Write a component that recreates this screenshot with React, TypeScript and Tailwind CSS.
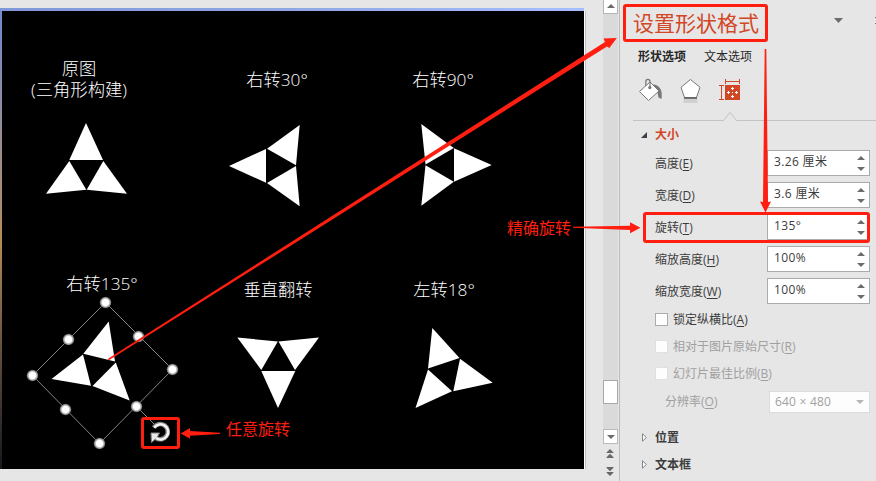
import React from "react";

const TRIANGLES: string[] = [
  "86,123 69.3,160 103,160",
  "69.3,161 46,193.7 86.3,189.7",
  "103.3,161 127,193.7 86.7,189.7",
  "229,166 266,149 266,182.7",
  "267,148.7 299.7,125 296,165.3",
  "267,183 299.7,206.3 296,166",
  "421.3,124 453.8,148 425.5,164.5",
  "421.3,205.7 453.8,181.7 425.5,165.3",
  "491.7,165 454,148.3 454,181.7",
  "108.7,321.5 83.3,353.7 115,361.5",
  "51.5,379 83,354.5 91,385.7",
  "129.7,400.5 115.8,362.5 92.5,386",
  "237.3,337.5 277.8,341.5 261.3,370",
  "319,337.5 278.5,341.5 295,370",
  "278,408 261.3,371 295.3,371",
  "432.3,328 459.5,358 428,368.5",
  "415.5,408 428,369.5 452,391.3",
  "492.7,382.7 460,358.7 453.3,391.3",
];

const HANDLES: [number, number][] = [
  [105.5, 302.5], [138.5, 336.5], [172.5, 369.5], [136.5, 406.5],
  [99.5, 443.5], [65.5, 409.5], [32.5, 375.5], [68.5, 339.5],
];

function SlideShapes() {
  return (
    <svg className="absolute left-0 top-0" width="620" height="481" viewBox="0 0 620 481">
      <defs>
        <radialGradient id="handle">
          <stop offset="0.55" stopColor="#fff" />
          <stop offset="0.75" stopColor="#b4b4b4" />
          <stop offset="1" stopColor="#555" />
        </radialGradient>
      </defs>
      {TRIANGLES.map((p) => (
        <polygon key={p} points={p} fill="#fff" />
      ))}
      <path d="M105.5 302.5 172.5 369.5 99.5 443.5 32.5 375.5ZM136.5 406.5 155 425" fill="none" stroke="#858585" strokeWidth="1" />
      {HANDLES.map(([x, y]) => (
        <circle key={x} cx={x} cy={y} r="5.8" fill="url(#handle)" />
      ))}
      <path d="M153.8 427.6A7.6 7.6 0 1 1 156 438" fill="none" stroke="#858585" strokeWidth="4.6" />
      <path d="M151 433H159.5L157 437.5 151.5 442.5Z" fill="#e8e8e8" stroke="#858585" strokeWidth="1" />
      <path d="M154.2 427.8A7.6 7.6 0 1 1 156 438" fill="none" stroke="#f4f4f4" strokeWidth="2.6" />
    </svg>
  );
}

function Annotations() {
  return (
    <svg className="pointer-events-none absolute left-0 top-0" width="876" height="481" viewBox="0 0 876 481">
      <g fill="none" stroke="#ff1e0f" strokeWidth="3">
        <rect x="624.5" y="5.5" width="142" height="35" rx="1.5" />
        <rect x="644.5" y="213.5" width="224" height="28" rx="1.5" />
        <rect x="142.5" y="418.5" width="36" height="29" rx="1.5" />
      </g>
      <g fill="#ff1e0f">
        <polygon points="108,358.8 605,42 603.5,38.5 616.8,38 609.3,48 607,46.5 108.5,360.5" />
        <polygon points="573,226.7 630,225.8 630,222.2 640.5,227.7 630,233.2 630,230 573,227.7" />
        <polygon points="764.7,49 766.3,49 768,202 771,201.5 765.5,212.5 760,201.5 763,202" />
        <polygon points="220,432.8 190,431 190,428 180.7,433.4 190,438.7 190,435.7 220,434" />
      </g>
    </svg>
  );
}

function DoubleArrow({ down = false }: { down?: boolean }) {
  return (
    <svg width="8" height="9" viewBox="0 0 8 9" className={down ? "rotate-180" : ""}>
      <path d="M4 0 7.5 3.5V4H.5V3.5ZM4 4.8 7.5 8.3V9H.5V8.3Z" fill="#686868" />
    </svg>
  );
}

function Triangle({ down = false, color = "#6c6c6c" }: { down?: boolean; color?: string }) {
  return (
    <svg width="8" height="4" viewBox="0 0 8 4" className={down ? "rotate-180" : ""}>
      <path d="M4 0 8 4H0Z" fill={color} />
    </svg>
  );
}

function Scrollbar() {
  return (
    <div className="flex h-[481px] w-[15px] flex-col items-center">
      <div className="flex h-[14px] w-[15px] shrink-0 items-center justify-center border border-t-0 border-[#b5b5b5] bg-white pb-[2px]">
        <Triangle />
      </div>
      <div className="h-[366px] w-full shrink-0 bg-[#dadada]" />
      <div className="h-6 w-full shrink-0 border border-[#a8a8a8] bg-white" />
      <div className="h-[25px] w-full shrink-0 bg-[#dadada]" />
      <div className="flex h-[15px] w-full shrink-0 items-center justify-center border border-[#bababa] bg-white">
        <Triangle down />
      </div>
      <div className="flex flex-col gap-[9px] pr-px pt-[5px]">
        <DoubleArrow />
        <DoubleArrow down />
      </div>
    </div>
  );
}

function Caption({ className, children }: { className: string; children: React.ReactNode }) {
  return (
    <div className={"absolute -translate-x-1/2 whitespace-nowrap text-center text-[17.3px] font-light leading-[21px] text-white " + className}>
      {children}
    </div>
  );
}

function Slide() {
  return (
    <div className="relative flex h-[481px] w-[603px] shrink-0 flex-col pt-2">
      <div className="h-[3px] w-[584px] bg-gradient-to-r from-[#7f96d8] via-[#8fa8e4] to-[#a6bdff]" />
      <div className="flex h-[458px] w-[586px] border-r border-[#c2c2c2]">
        <div className="w-[2px] bg-gradient-to-b from-[#7187cf] via-[#b68b58] to-[#17171f]" />
        <div className="w-[582px] bg-black" />
        <div className="w-px bg-white" />
      </div>
      <SlideShapes />
      <Caption className="left-[79px] top-[58px]">原图<br />(三角形构建)</Caption>
      <Caption className="left-[277px] top-[69px]">右转30°</Caption>
      <Caption className="left-[443px] top-[69px]">右转90°</Caption>
      <Caption className="left-[102px] top-[273px]">右转135°</Caption>
      <Caption className="left-[278px] top-[279px]">垂直翻转</Caption>
      <Caption className="left-[444px] top-[279px]">左转18°</Caption>
      <div className="absolute left-[507px] top-[217px] whitespace-nowrap text-[16px] leading-[22px] text-[#ff1e0f]">精确旋转</div>
      <div className="absolute left-[226px] top-[418px] whitespace-nowrap text-[16px] leading-[22px] text-[#ff1e0f]">任意旋转</div>
    </div>
  );
}

function Hotkey({ k }: { k: string }) {
  return <>(<span className="underline underline-offset-2">{k}</span>)</>;
}

function Field({ label, k, value }: { label: string; k: string; value: string }) {
  return (
    <div className="flex h-[26px] items-center justify-between pl-[35px] pr-[6px]">
      <span className="pt-px">{label}<Hotkey k={k} /></span>
      <div className="flex h-[26px] w-[103px] items-center justify-between border border-[#ababab] bg-white pl-[6px] pr-1">
        <span className="pb-[2px] tracking-[0.35px]">{value}</span>
        <div className="flex flex-col gap-[7px] pt-px">
          <Triangle />
          <Triangle down />
        </div>
      </div>
    </div>
  );
}

function Check({ label, k, disabled = false }: { label: string; k: string; disabled?: boolean }) {
  return (
    <div className={"flex h-[27px] items-center gap-[5px] pl-[35px] " + (disabled ? "text-[#a0a0a0]" : "")}>
      <div className={"size-[13px] border bg-[#fdfdfd] " + (disabled ? "border-[#e0e0e0]" : "border-[#ababab]")} />
      <span className="pt-px">{label}<Hotkey k={k} /></span>
    </div>
  );
}

function Collapsed({ label }: { label: string }) {
  return (
    <div className="flex h-[27px] items-center gap-[8px] pl-[22px]">
      <svg width="5" height="9" viewBox="0 0 5 9"><path d="M.5.8 4.4 4.5.5 8.2Z" fill="#fff" stroke="#777" strokeWidth=".9" /></svg>
      <span className="font-bold">{label}</span>
    </div>
  );
}

function PaneIcons() {
  return (
    <div className="flex h-[33px] items-start pl-[18px] pt-px">
      <svg width="26" height="26" viewBox="638 78 26 26" fill="none">
        <path d="M653 84.5C659 85 663 89 661.5 99L658.5 97.5 657 90Z" fill="#777" />
        <path d="M650 82 639.5 91.5 648.5 100.5 659 91Z" fill="#fff" stroke="#777" />
        <path d="M645.8 86V81.5Q645.8 79.3 648 79.3Q650 79.3 650 82V87" stroke="#777" strokeWidth="1.2" />
        <circle cx="649.8" cy="87.6" r="1.6" fill="#777" />
      </svg>
      <svg className="ml-4" width="22" height="26" viewBox="680 78 22 26" fill="none">
        <path d="M683.5 99H697.5V103H683.5Z" fill="#d0d0d0" />
        <path d="M690.5 79.5 700 87.3 696.5 97.5H684.5L681 87.3Z" fill="#fff" stroke="#777" />
        <path d="M684 98H697" stroke="#666" strokeWidth="1.8" />
      </svg>
      <svg className="ml-[17px]" width="23" height="24" viewBox="719 79 23 24" fill="none" stroke="#d24726">
        <path d="M725.5 80V85M739.5 80V85M725.5 82.5H739.5M719 86.5H724M719 100.5H724M721.5 86.5V100.5" />
        <path d="M725 86H740V101H725Z" fill="#d24726" stroke="none" />
        <path d="M732.5 88V91M732.5 96V99M727 93.5H730M735 93.5H738M732 93.5H733M731 89.5H734M731 97.5H734M728.5 92V95M736.5 92V95" stroke="#fff" />
      </svg>
    </div>
  );
}

function FormatPane() {
  return (
    <div className="flex w-[257px] shrink-0 flex-col border-l border-[#bcbcbc] text-[12px] leading-4 text-[#3c3c3c]">
      <div className="flex h-[44px] items-center justify-between pl-[13px]">
        <h1 className="whitespace-nowrap pt-[2px] text-[21px] leading-[30px] text-[#d24726]">设置形状格式</h1>
        <div className="flex items-center gap-[32px] pb-1">
          <svg width="9" height="5" viewBox="0 0 9 5"><path d="M0 0H9L4.5 5Z" fill="#6c6c6c" /></svg>
          <div className="flex flex-col gap-[5px]">
            <i className="size-px bg-[#777]" />
            <i className="size-px bg-[#777]" />
          </div>
        </div>
      </div>
      <div className="flex h-[33px] items-start gap-[18px] pl-[18px] pt-[5px] text-[#262626]">
        <span className="font-bold">形状选项</span>
        <span>文本选项</span>
      </div>
      <PaneIcons />
      <svg className="ml-[13px]" width="243" height="12" viewBox="633 110 243 12">
        <path d="M633 120.5H723.5L730 112.5 736.5 120.5H876" fill="none" stroke="#c3c3c3" />
      </svg>
      <div className="flex h-[28px] items-center gap-[8px] pb-[3px] pl-[21px] text-[#d24726]">
        <svg width="6" height="6" viewBox="0 0 6 6"><path d="M6 0V6H0Z" fill="#404040" /></svg>
        <span className="font-bold">大小</span>
      </div>
      <div className="flex flex-col gap-[6px]">
        <Field label="高度" k="E" value="3.26 厘米" />
        <Field label="宽度" k="D" value="3.6 厘米" />
        <Field label="旋转" k="T" value="135°" />
        <Field label="缩放高度" k="H" value="100%" />
        <Field label="缩放宽度" k="W" value="100%" />
      </div>
      <div className="pt-[2px]">
        <Check label="锁定纵横比" k="A" />
        <Check label="相对于图片原始尺寸" k="R" disabled />
        <Check label="幻灯片最佳比例" k="B" disabled />
      </div>
      <div className="flex h-[28px] items-center justify-between pl-[45px] pr-[6px] pt-[2px] text-[#a0a0a0]">
        <span>分辨率<Hotkey k="O" /></span>
        <div className="flex h-[22px] w-[101px] items-center justify-between border border-[#dcdcdc] bg-[#fdfdfd] pl-[5px] pr-[5px]">
          <span className="tracking-[0.2px]">640 × 480</span>
          <Triangle down color="#b5b5b5" />
        </div>
      </div>
      <div className="pt-[9px]">
        <Collapsed label="位置" />
        <Collapsed label="文本框" />
      </div>
    </div>
  );
}

export default function App() {
  return (
    <div className="relative flex h-[481px] w-[876px] overflow-hidden bg-[#e6e6e6] font-['Open_Sans','Noto_Sans_CJK_SC',sans-serif]">
      <Slide />
      <Scrollbar />
      <div className="w-px shrink-0" />
      <FormatPane />
      <Annotations />
    </div>
  );
}
